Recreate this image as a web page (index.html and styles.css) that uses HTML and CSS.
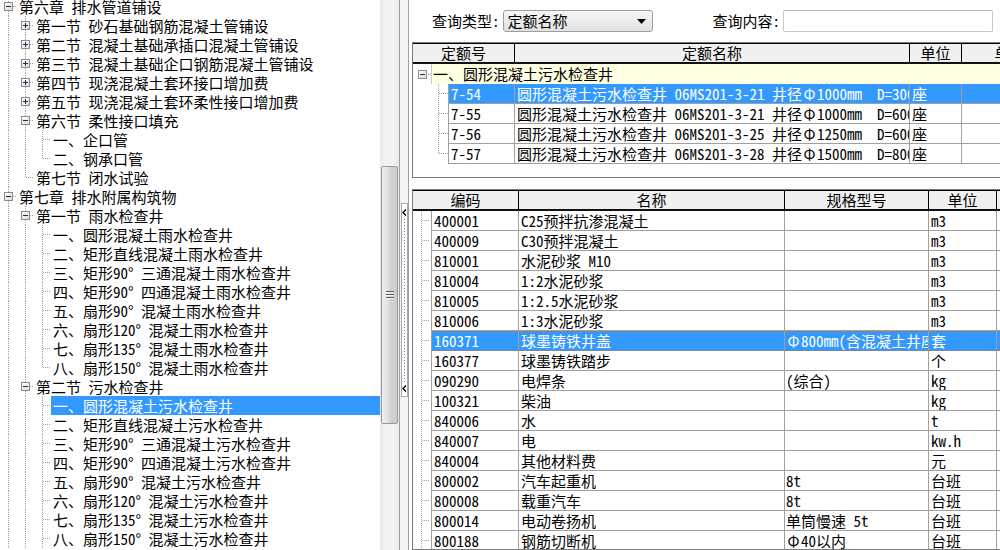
FILE: index.html
```html
<!DOCTYPE html>
<html lang="zh-CN">
<head>
<meta charset="utf-8">
<title>定额查询</title>
<link rel="stylesheet" href="styles.css">
</head>
<body>
<div class="app">
  <div class="left">
    <div class="tree">
      <div class="tree-list">
        <div class="tr"><span class="n mid"><span class="box minus"></span></span><span class="tt">第六章 排水管道铺设</span></div>
        <div class="tr"><span class="g v"></span><span class="n mid"><span class="box plus"></span></span><span class="tt">第一节 砂石基础钢筋混凝土管铺设</span></div>
        <div class="tr"><span class="g v"></span><span class="n mid"><span class="box plus"></span></span><span class="tt">第二节 混凝土基础承插口混凝土管铺设</span></div>
        <div class="tr"><span class="g v"></span><span class="n mid"><span class="box plus"></span></span><span class="tt">第三节 混凝土基础企口钢筋混凝土管铺设</span></div>
        <div class="tr"><span class="g v"></span><span class="n mid"><span class="box plus"></span></span><span class="tt">第四节 现浇混凝土套环接口增加费</span></div>
        <div class="tr"><span class="g v"></span><span class="n mid"><span class="box plus"></span></span><span class="tt">第五节 现浇混凝土套环柔性接口增加费</span></div>
        <div class="tr"><span class="g v"></span><span class="n mid"><span class="box minus"></span></span><span class="tt">第六节 柔性接口填充</span></div>
        <div class="tr"><span class="g v"></span><span class="g v"></span><span class="n mid"></span><span class="tt">一、企口管</span></div>
        <div class="tr"><span class="g v"></span><span class="g v"></span><span class="n last"></span><span class="tt">二、钢承口管</span></div>
        <div class="tr"><span class="g v"></span><span class="n last"></span><span class="tt">第七节 闭水试验</span></div>
        <div class="tr"><span class="n mid"><span class="box minus"></span></span><span class="tt">第七章 排水附属构筑物</span></div>
        <div class="tr"><span class="g v"></span><span class="n mid"><span class="box minus"></span></span><span class="tt">第一节 雨水检查井</span></div>
        <div class="tr"><span class="g v"></span><span class="g v"></span><span class="n mid"></span><span class="tt">一、圆形混凝土雨水检查井</span></div>
        <div class="tr"><span class="g v"></span><span class="g v"></span><span class="n mid"></span><span class="tt">二、矩形直线混凝土雨水检查井</span></div>
        <div class="tr"><span class="g v"></span><span class="g v"></span><span class="n mid"></span><span class="tt">三、矩形90° 三通混凝土雨水检查井</span></div>
        <div class="tr"><span class="g v"></span><span class="g v"></span><span class="n mid"></span><span class="tt">四、矩形90° 四通混凝土雨水检查井</span></div>
        <div class="tr"><span class="g v"></span><span class="g v"></span><span class="n mid"></span><span class="tt">五、扇形90° 混凝土雨水检查井</span></div>
        <div class="tr"><span class="g v"></span><span class="g v"></span><span class="n mid"></span><span class="tt">六、扇形120° 混凝土雨水检查井</span></div>
        <div class="tr"><span class="g v"></span><span class="g v"></span><span class="n mid"></span><span class="tt">七、扇形135° 混凝土雨水检查井</span></div>
        <div class="tr"><span class="g v"></span><span class="g v"></span><span class="n last"></span><span class="tt">八、扇形150° 混凝土雨水检查井</span></div>
        <div class="tr"><span class="g v"></span><span class="n mid"><span class="box minus"></span></span><span class="tt">第二节 污水检查井</span></div>
        <div class="tr"><span class="g v"></span><span class="g v"></span><span class="n mid"></span><span class="tt sel">一、圆形混凝土污水检查井</span></div>
        <div class="tr"><span class="g v"></span><span class="g v"></span><span class="n mid"></span><span class="tt">二、矩形直线混凝土污水检查井</span></div>
        <div class="tr"><span class="g v"></span><span class="g v"></span><span class="n mid"></span><span class="tt">三、矩形90° 三通混凝土污水检查井</span></div>
        <div class="tr"><span class="g v"></span><span class="g v"></span><span class="n mid"></span><span class="tt">四、矩形90° 四通混凝土污水检查井</span></div>
        <div class="tr"><span class="g v"></span><span class="g v"></span><span class="n mid"></span><span class="tt">五、扇形90° 混凝土污水检查井</span></div>
        <div class="tr"><span class="g v"></span><span class="g v"></span><span class="n mid"></span><span class="tt">六、扇形120° 混凝土污水检查井</span></div>
        <div class="tr"><span class="g v"></span><span class="g v"></span><span class="n mid"></span><span class="tt">七、扇形135° 混凝土污水检查井</span></div>
        <div class="tr"><span class="g v"></span><span class="g v"></span><span class="n mid"></span><span class="tt">八、扇形150° 混凝土污水检查井</span></div>
      </div>
    </div>
    <div class="vscroll">
      <div class="thumb"><span class="grip"></span></div>
    </div>
  </div>

  <div class="splitter">
    <div class="handle">
      <svg class="chev" width="5" height="7" viewBox="0 0 5 7"><polyline points="4,0.5 1,3.5 4,6.5" fill="none" stroke="#000" stroke-width="1.4"/></svg>
      <span class="dots"></span>
      <svg class="chev" width="5" height="7" viewBox="0 0 5 7"><polyline points="4,0.5 1,3.5 4,6.5" fill="none" stroke="#000" stroke-width="1.4"/></svg>
    </div>
  </div>

  <div class="right">
    <div class="query">
      <span class="lbl">查询类型:</span>
      <div class="select"><span>定额名称</span><svg width="9" height="5" viewBox="0 0 9 5"><path d="M0 0H9L4.5 5Z" fill="#000"/></svg></div>
      <span class="lbl lbl2">查询内容:</span>
      <div class="input"></div>
    </div>

    <div class="grid up">
      <div class="ghead">
        <span class="hc uh1">定额号</span>
        <span class="hc uh2">定额名称</span>
        <span class="hc uh3">单位</span>
        <span class="hc uh4">单价</span>
      </div>
      <div class="grow grp"><span class="ut0"><span class="box minus"></span></span><span class="ycell">一、圆形混凝土污水检查井</span></div>
      <div class="grow"><span class="ut mid"></span><span class="c u1 s">7-54</span><span class="c u2 s">圆形混凝土污水检查井 06MS201-3-21 井径<span class="fw">Φ</span>1000mm  D=300</span><span class="c u3 s">座</span><span class="c u4 s"></span></div>
      <div class="grow"><span class="ut mid"></span><span class="c u1">7-55</span><span class="c u2">圆形混凝土污水检查井 06MS201-3-21 井径<span class="fw">Φ</span>1000mm  D=600</span><span class="c u3">座</span><span class="c u4"></span></div>
      <div class="grow"><span class="ut mid"></span><span class="c u1">7-56</span><span class="c u2">圆形混凝土污水检查井 06MS201-3-25 井径<span class="fw">Φ</span>1250mm  D=600</span><span class="c u3">座</span><span class="c u4"></span></div>
      <div class="grow"><span class="ut last"></span><span class="c u1">7-57</span><span class="c u2">圆形混凝土污水检查井 06MS201-3-28 井径<span class="fw">Φ</span>1500mm  D=800</span><span class="c u3">座</span><span class="c u4"></span></div>
    </div>

    <div class="grid low">
      <div class="ghead">
        <span class="hc lh1">编码</span>
        <span class="hc lh2">名称</span>
        <span class="hc lh3">规格型号</span>
        <span class="hc lh4">单位</span>
        <span class="hc lh5"></span>
      </div>
      <div class="grow"><span class="lt"></span><span class="c l1">400001</span><span class="c l2">C25预拌抗渗混凝土</span><span class="c l3"></span><span class="c l4">m3</span><span class="c l5"></span></div>
      <div class="grow"><span class="lt"></span><span class="c l1">400009</span><span class="c l2">C30预拌混凝土</span><span class="c l3"></span><span class="c l4">m3</span><span class="c l5"></span></div>
      <div class="grow"><span class="lt"></span><span class="c l1">810001</span><span class="c l2">水泥砂浆 M10</span><span class="c l3"></span><span class="c l4">m3</span><span class="c l5"></span></div>
      <div class="grow"><span class="lt"></span><span class="c l1">810004</span><span class="c l2">1:2水泥砂浆</span><span class="c l3"></span><span class="c l4">m3</span><span class="c l5"></span></div>
      <div class="grow"><span class="lt"></span><span class="c l1">810005</span><span class="c l2">1:2.5水泥砂浆</span><span class="c l3"></span><span class="c l4">m3</span><span class="c l5"></span></div>
      <div class="grow"><span class="lt"></span><span class="c l1">810006</span><span class="c l2">1:3水泥砂浆</span><span class="c l3"></span><span class="c l4">m3</span><span class="c l5"></span></div>
      <div class="grow focus"><span class="lt"></span><span class="c l1 s">160371</span><span class="c l2 s">球墨铸铁井盖</span><span class="c l3 s"><span class="fw">Φ</span>800mm(含混凝土井座)</span><span class="c l4 s">套</span><span class="c l5 s"></span></div>
      <div class="grow"><span class="lt"></span><span class="c l1">160377</span><span class="c l2">球墨铸铁踏步</span><span class="c l3"></span><span class="c l4">个</span><span class="c l5"></span></div>
      <div class="grow"><span class="lt"></span><span class="c l1">090290</span><span class="c l2">电焊条</span><span class="c l3">(综合)</span><span class="c l4">kg</span><span class="c l5"></span></div>
      <div class="grow"><span class="lt"></span><span class="c l1">100321</span><span class="c l2">柴油</span><span class="c l3"></span><span class="c l4">kg</span><span class="c l5"></span></div>
      <div class="grow"><span class="lt"></span><span class="c l1">840006</span><span class="c l2">水</span><span class="c l3"></span><span class="c l4">t</span><span class="c l5"></span></div>
      <div class="grow"><span class="lt"></span><span class="c l1">840007</span><span class="c l2">电</span><span class="c l3"></span><span class="c l4">kw.h</span><span class="c l5"></span></div>
      <div class="grow"><span class="lt"></span><span class="c l1">840004</span><span class="c l2">其他材料费</span><span class="c l3"></span><span class="c l4">元</span><span class="c l5"></span></div>
      <div class="grow"><span class="lt"></span><span class="c l1">800002</span><span class="c l2">汽车起重机</span><span class="c l3">8t</span><span class="c l4">台班</span><span class="c l5"></span></div>
      <div class="grow"><span class="lt"></span><span class="c l1">800008</span><span class="c l2">载重汽车</span><span class="c l3">8t</span><span class="c l4">台班</span><span class="c l5"></span></div>
      <div class="grow"><span class="lt"></span><span class="c l1">800014</span><span class="c l2">电动卷扬机</span><span class="c l3">单筒慢速 5t</span><span class="c l4">台班</span><span class="c l5"></span></div>
      <div class="grow"><span class="lt"></span><span class="c l1">800188</span><span class="c l2">钢筋切断机</span><span class="c l3"><span class="fw">Φ</span>40以内</span><span class="c l4">台班</span><span class="c l5"></span></div>
    </div>
  </div>
</div>
</body>
</html>
```

FILE: styles.css
```css
* { box-sizing: border-box; }

html, body {
  margin: 0;
  padding: 0;
  background: #fff;
}

body {
  font-family: "Noto Sans Mono CJK SC", "Noto Sans CJK SC", "Liberation Mono", monospace;
  font-size: 15px;
  color: #000;
}

.app {
  display: flex;
  width: 1000px;
  height: 550px;
  overflow: hidden;
}

/* ---------- left tree pane ---------- */
.left {
  flex: none;
  width: 400px;
  display: flex;
  border-right: 1px solid #a0a0a0;
}

.tree {
  width: 380px;
  overflow: hidden;
}

.tree-list {
  margin-top: -3px;
}

.tr {
  display: flex;
  height: 19px;
  white-space: nowrap;
}

.g, .n {
  flex: none;
  width: 17px;
  height: 19px;
  background-repeat: no-repeat;
}

.g.v {
  background-image: repeating-linear-gradient(to bottom, #a0a0a0 0 1px, transparent 1px 2px);
  background-size: 1px 100%;
  background-position: 8px 0;
}

.n {
  display: flex;
  align-items: center;
  justify-content: center;
}

.n.mid {
  background-image:
    repeating-linear-gradient(to bottom, #a0a0a0 0 1px, transparent 1px 2px),
    repeating-linear-gradient(to right, #a0a0a0 0 1px, transparent 1px 2px);
  background-size: 1px 100%, 8px 1px;
  background-position: 8px 0, 9px 9px;
}

.n.last {
  background-image:
    repeating-linear-gradient(to bottom, #a0a0a0 0 1px, transparent 1px 2px),
    repeating-linear-gradient(to right, #a0a0a0 0 1px, transparent 1px 2px);
  background-size: 1px 10px, 8px 1px;
  background-position: 8px 0, 9px 9px;
}

.box {
  display: block;
  width: 9px;
  height: 9px;
  border: 1px solid #8c8c8c;
  background-repeat: no-repeat;
}

.box.minus {
  background-image:
    linear-gradient(#1c2a63, #1c2a63),
    linear-gradient(135deg, #ffffff, #dcdcdc);
  background-size: 5px 1px, 100% 100%;
  background-position: 1px 3px, 0 0;
}

.box.plus {
  background-image:
    linear-gradient(#1c2a63, #1c2a63),
    linear-gradient(#1c2a63, #1c2a63),
    linear-gradient(135deg, #ffffff, #dcdcdc);
  background-size: 5px 1px, 1px 5px, 100% 100%;
  background-position: 1px 3px, 3px 1px, 0 0;
}

.tt {
  flex: 1;
  padding-left: 2px;
  line-height: 19px;
  height: 19px;
}

.tt.sel {
  background: #3399ff;
  color: #fff;
}

/* scrollbar */
.vscroll {
  width: 19px;
  background: linear-gradient(to right, #e9e9e9, #f3f3f3 30%, #f3f3f3 70%, #ebebeb);
  display: flex;
  flex-direction: column;
  align-items: center;
}

.thumb {
  margin-top: 166px;
  width: 17px;
  height: 258px;
  border: 1px solid #979797;
  border-radius: 2px;
  background: linear-gradient(to right, #f0f0f0, #e0e0e0 45%, #d2d2d2 55%, #cdcdcd);
  display: flex;
  align-items: center;
  justify-content: center;
}

.grip {
  display: block;
  width: 8px;
  height: 8px;
  background: repeating-linear-gradient(to bottom, #5e5e5e 0 1px, #f4f4f4 1px 2px, transparent 2px 3px);
}

/* splitter */
.splitter {
  flex: none;
  width: 9px;
  background: #f4f4f4;
  border-right: 1px solid #a0a0a0;
  display: flex;
  flex-direction: column;
  align-items: center;
}

.handle {
  margin-top: 203px;
  width: 7px;
  height: 194px;
  background: #fff;
  border: 1px solid #a8a8a8;
  display: flex;
  flex-direction: column;
  align-items: center;
  padding: 5px 0 4px;
}

.chev {
  display: block;
  flex: none;
}

.dots {
  flex: 1;
  width: 1px;
  margin: 3px 0;
  background: repeating-linear-gradient(to bottom, #3d7ee0 0 1px, transparent 1px 3px);
}

/* ---------- right pane ---------- */
.right {
  flex: 1;
  min-width: 0;
  display: flex;
  flex-direction: column;
  overflow: hidden;
  padding-left: 3px;
}

.query {
  flex: none;
  height: 42px;
  display: flex;
  align-items: center;
  padding-left: 20px;
}

.lbl {
  white-space: nowrap;
  line-height: 20px;
}

.lbl2 {
  margin-left: 60px;
}

.select {
  margin-left: 3px;
  width: 150px;
  height: 22px;
  border: 1px solid #9e9e9e;
  border-radius: 3px;
  background: linear-gradient(#f7f7f7, #ececec 50%, #e0e0e0);
  display: flex;
  align-items: center;
  justify-content: space-between;
  padding: 0 6px 0 4px;
  line-height: 20px;
}

.select svg {
  display: block;
}

.input {
  margin-left: 3px;
  width: 210px;
  height: 22px;
  border: 1px solid #c9c9c9;
  border-top-color: #b5b5b5;
  border-radius: 2px;
  background: #fff;
}

/* grids */
.grid {
  flex: none;
  width: 660px;
  border: 1px solid #7a7a7a;
  border-right: none;
  overflow: hidden;
  background: #fff;
}

.grid.up {
  height: 136px;
}

.grid.low {
  margin-top: 11px;
  flex: 1;
}

.ghead {
  display: flex;
  height: 21px;
  background: #f0f0f0;
  border-top: 1px solid #000;
  border-bottom: 2px solid #111;
}

.hc {
  flex: none;
  height: 18px;
  line-height: 18px;
  text-align: center;
  border-right: 1px solid #000;
  white-space: nowrap;
}

.uh1 { width: 102px; }
.uh2 { width: 395px; }
.uh3 { width: 52px; }
.uh4 { width: 96px; }

.lh1 { width: 106px; }
.lh2 { width: 266px; }
.lh3 { width: 144px; }
.lh4 { width: 68px; }
.lh5 { width: 60px; }

.grow {
  display: flex;
  height: 20px;
}

.c {
  flex: none;
  height: 20px;
  line-height: 19px;
  padding-left: 2px;
  border-right: 1px solid #a0a0a0;
  border-bottom: 1px solid #a0a0a0;
  white-space: pre;
  overflow: hidden;
}

.c.s {
  background-color: #3399ff;
  color: #fff;
}

.fw {
  display: inline-block;
  width: 15px;
  text-align: center;
}

.u1 { width: 67px; border-left: 1px solid #a0a0a0; }
.u2 { width: 395px; }
.u3 { width: 52px; }
.u4 { width: 96px; }

.l1 { width: 88px; border-left: 1px solid #a0a0a0; }
.l2 { width: 266px; }
.l3 { width: 144px; padding-left: 1px; }
.l4 { width: 68px; }
.l5 { width: 60px; }

/* focus rectangle of the current material row */
.grow.focus .c {
  border-bottom: 1px dotted #b9773f;
  background-image: repeating-linear-gradient(to right, #b9773f 0 1px, transparent 1px 2px);
  background-size: 100% 1px;
  background-position: 0 0;
  background-repeat: no-repeat;
}

/* grid tree columns */
.ut0 {
  flex: none;
  width: 18px;
  height: 20px;
  display: flex;
  align-items: center;
  justify-content: center;
  background-image: repeating-linear-gradient(to right, #a0a0a0 0 1px, transparent 1px 2px);
  background-size: 5px 1px;
  background-position: 13px 10px;
  background-repeat: no-repeat;
}

.ycell {
  flex: 1;
  height: 20px;
  line-height: 19px;
  background: #ffffe1;
  border-left: 1px solid #c8c8c8;
  padding-left: 1px;
  white-space: nowrap;
}

.ut, .lt {
  flex: none;
  height: 20px;
  background-repeat: no-repeat;
  background-image:
    repeating-linear-gradient(to bottom, #a0a0a0 0 1px, transparent 1px 2px),
    repeating-linear-gradient(to right, #a0a0a0 0 1px, transparent 1px 2px);
}

.ut {
  width: 35px;
  background-size: 1px 100%, 9px 1px;
  background-position: 25px 0, 26px 9px;
}

.ut.last {
  background-size: 1px 10px, 9px 1px;
}

.lt {
  width: 18px;
  background-size: 1px 100%, 8px 1px;
  background-position: 8px 0, 9px 9px;
}
```
